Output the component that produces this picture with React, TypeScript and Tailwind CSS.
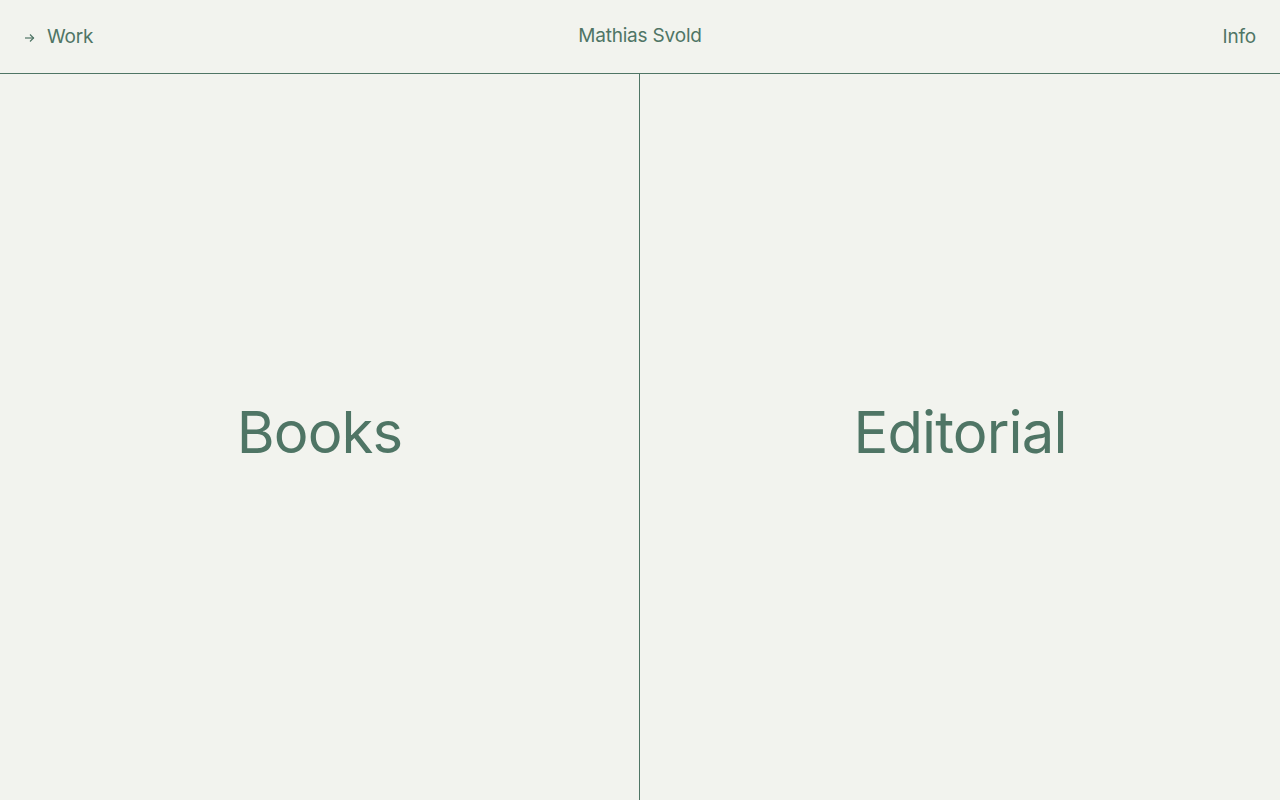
import React from 'react';

function Arrow() {
  return (
    <svg width="11" height="10" viewBox="0 0 11 10" fill="none" stroke="currentColor" strokeWidth="1.2">
      <path d="M1 5h9" />
      <path d="M6 1.5L9.5 5 6 8.5" />
    </svg>
  );
}

export default function App() {
  return (
    <div
      className="h-[800px] w-full flex flex-col bg-[#f2f3ee] text-[#4f7565] overflow-hidden"
      style={{ fontFamily: 'Inter, "Noto Sans", sans-serif' }}
    >
      <header className="h-[74px] shrink-0 grid grid-cols-3 items-center px-6 border-b border-[#4f7565]">
        <a href="#" className="flex items-center gap-3 pt-[2px] text-[19px] tracking-[-0.01em]">
          <Arrow />
          <span>Work</span>
        </a>
        <div className="text-center text-[19px] tracking-[-0.01em]">Mathias Svold</div>
        <a href="#" className="text-right pt-[2px] text-[19px] tracking-[-0.01em]">Info</a>
      </header>
      <main className="flex-1 grid grid-cols-2">
        <a href="#" className="flex items-center justify-center border-r border-[#4f7565] pb-[10px]">
          <span className="text-[58px] tracking-[-0.015em]">Books</span>
        </a>
        <a href="#" className="flex items-center justify-center pb-[10px]">
          <span className="text-[58px] tracking-[-0.015em]">Editorial</span>
        </a>
      </main>
    </div>
  );
}
